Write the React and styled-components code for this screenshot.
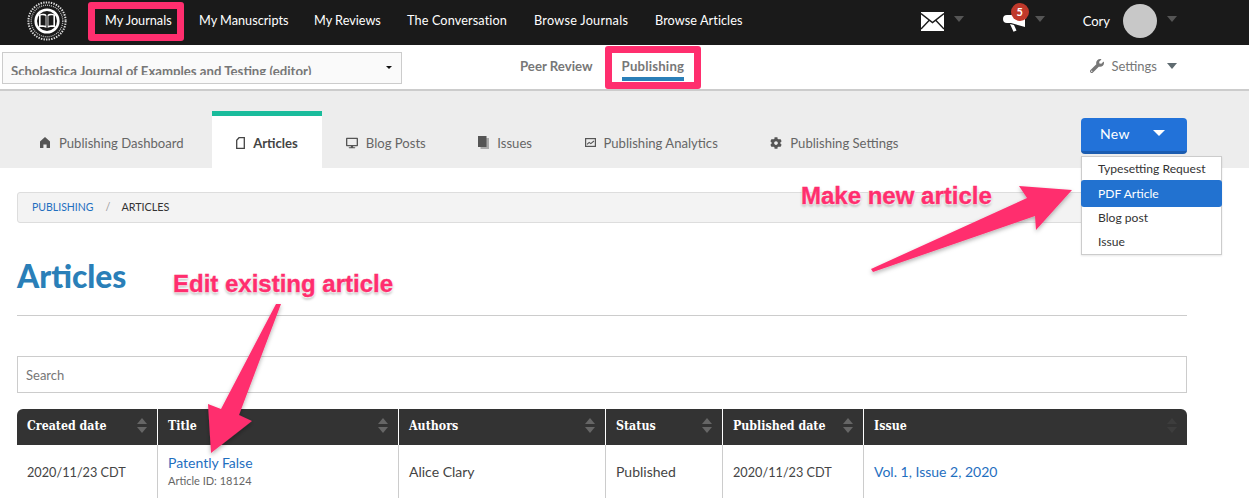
import React from "react";
import styled, { createGlobalStyle } from "styled-components";
import { FaDesktop, FaCog, FaWrench } from "react-icons/fa";

const columns = [
  { title: "Created date", width: 140, sortable: true },
  { title: "Title", width: 241, sortable: true },
  { title: "Authors", width: 207, sortable: true },
  { title: "Status", width: 117, sortable: true },
  { title: "Published date", width: 141, sortable: true },
  { title: "Issue", width: 324, sortable: false },
];

const navItems = [
  { label: "My Manuscripts", slot: 115, spacing: 0 },
  { label: "My Reviews", slot: 93, spacing: 0 },
  { label: "The Conversation", slot: 127, spacing: 0.12 },
  { label: "Browse Journals", slot: 121, spacing: 0.25 },
  { label: "Browse Articles", slot: 100, spacing: 0.07 },
];

const App = () => {
  return (
    <Page>
      <GlobalStyle />
      <TopBar>
        <SealLogo />
        <Nav>
          <NavLink $slot={94}>
            <NavLabel>
              My Journals
              <NavHighlight />
            </NavLabel>
          </NavLink>
          {navItems.map((item) => (
            <NavLink key={item.label} $slot={item.slot} $spacing={item.spacing}>
              {item.label}
            </NavLink>
          ))}
        </Nav>
        <UserArea>
          <IconMenu $width={43}>
            <EnvelopeIcon />
            <DarkCaret />
          </IconMenu>
          <IconMenu $width={43}>
            <MegaphoneIcon />
            <Badge>5</Badge>
            <DarkCaret />
          </IconMenu>
          <UserName>Cory</UserName>
          <Avatar />
          <DarkCaret />
        </UserArea>
      </TopBar>

      <SubBar>
        <JournalSelect>
          <JournalName>Scholastica Journal of Examples and Testing (editor)</JournalName>
          <SelectCaret />
        </JournalSelect>
        <SubNav>
          <SubLink>Peer Review</SubLink>
          <SubLink $active>
            Publishing
            <SubHighlight />
          </SubLink>
        </SubNav>
        <SettingsMenu>
          <FaWrench size={14} />
          <span>Settings</span>
          <GreyCaret />
        </SettingsMenu>
      </SubBar>

      <TabsBar>
        <Tabs>
          <Tab>
            <HomeIcon />
            Publishing Dashboard
          </Tab>
          <Tab $active>
            <ArticleIcon />
            Articles
          </Tab>
          <Tab>
            <FaDesktop size={12} />
            Blog Posts
          </Tab>
          <Tab>
            <IssuesIcon />
            Issues
          </Tab>
          <Tab>
            <AnalyticsIcon />
            Publishing Analytics
          </Tab>
          <Tab>
            <FaCog size={12} />
            Publishing Settings
          </Tab>
        </Tabs>
        <NewMenu>
          <NewButton>
            New
            <WhiteCaret />
          </NewButton>
          <Dropdown>
            <DropdownItem>Typesetting Request</DropdownItem>
            <DropdownItem $selected>PDF Article</DropdownItem>
            <DropdownItem>Blog post</DropdownItem>
            <DropdownItem>Issue</DropdownItem>
          </Dropdown>
        </NewMenu>
      </TabsBar>

      <Content>
        <Breadcrumb>
          <CrumbLink>Publishing</CrumbLink>
          <CrumbDivider>/</CrumbDivider>
          <span>Articles</span>
        </Breadcrumb>
        <Heading>Articles</Heading>
        <Divider />
        <SearchBox placeholder="Search" />
        <Table>
          <colgroup>
            {columns.map((col) => (
              <col key={col.title} width={col.width} />
            ))}
          </colgroup>
          <thead>
            <tr>
              {columns.map((col) => (
                <HeadCell key={col.title}>
                  {col.title}
                  <SortArrows $faded={!col.sortable}>
                    <i />
                    <i />
                  </SortArrows>
                </HeadCell>
              ))}
            </tr>
          </thead>
          <tbody>
            <tr>
              <DateCell>2020/11/23 CDT</DateCell>
              <BodyCell>
                <TitleLink>Patently False</TitleLink>
                <ArticleId>Article ID: 18124</ArticleId>
              </BodyCell>
              <BodyCell>Alice Clary</BodyCell>
              <BodyCell>Published</BodyCell>
              <DateCell>2020/11/23 CDT</DateCell>
              <BodyCell>
                <IssueLink>Vol. 1, Issue 2, 2020</IssueLink>
              </BodyCell>
            </tr>
          </tbody>
        </Table>
      </Content>

      <ArrowLayer viewBox="0 0 1249 498">
        <defs>
          <filter id="arrowShadow" x="-20%" y="-20%" width="140%" height="140%">
            <feDropShadow dx="0" dy="2" stdDeviation="2" floodColor="#000" floodOpacity="0.3" />
          </filter>
        </defs>
        <polygon
          filter="url(#arrowShadow)"
          fill="#ff2e6e"
          points="871,269 1027,198 1019,186 1072,190 1036,230 1035,216 873,272"
        />
        <polygon
          filter="url(#arrowShadow)"
          fill="#ff2e6e"
          points="276,304 281,304 239,415 252,421 211,453 208,404 221,409"
        />
      </ArrowLayer>
      <CalloutNew>Make new article</CalloutNew>
      <CalloutEdit>Edit existing article</CalloutEdit>
    </Page>
  );
};

const SealLogo = () => (
  <LogoSvg viewBox="0 0 40 40">
    <circle cx="20" cy="20" r="18.6" fill="none" stroke="#ddd" strokeWidth="2" strokeDasharray="1.4 1.2" />
    <circle cx="20" cy="20" r="15.8" fill="none" stroke="#bbb" strokeWidth="1.4" strokeDasharray="1 1" />
    <circle cx="20" cy="20" r="12.6" fill="#fff" />
    <circle cx="20" cy="20" r="10" fill="#1a1a1a" />
    <path d="M12 13.5c3-1 6-1 7.4.4V27c-1.6-1.2-4.4-1.4-7.4-.6zM28 13.5c-3-1-6-1-7.4.4V27c1.6-1.2 4.4-1.4 7.4-.6z" fill="#fff" />
    <path d="M13.6 14.6c2-.5 3.8-.4 5 .5v9.7c-1.4-.7-3.1-.8-5-.5zM26.4 14.6c-2-.5-3.8-.4-5 .5v9.7c1.4-.7 3.1-.8 5-.5z" fill="#1a1a1a" />
  </LogoSvg>
);

const EnvelopeIcon = () => (
  <svg width="23" height="19" viewBox="0 0 23 19">
    <rect width="23" height="19" fill="#fff" />
    <path d="M0 1.5l11.5 9 11.5-9M0 17l8.5-9M23 17l-8.5-9" fill="none" stroke="#1a1a1a" strokeWidth="1.4" />
  </svg>
);

const MegaphoneIcon = () => (
  <svg width="23" height="21" viewBox="0 0 23 21">
    <path d="M23 0v16L9 12H5a4 4 0 0 1 0-8h4z" fill="#fff" />
    <path d="M8 13l4 1 2.5 5.5-3 1.2z" fill="#fff" />
  </svg>
);

const HomeIcon = () => (
  <svg width="11" height="11" viewBox="0 0 11 11">
    <path d="M5 0l5 4.6V11H6.6V7.4H3.4V11H0V4.6z" fill="#555" />
  </svg>
);

const ArticleIcon = () => (
  <svg width="9" height="12" viewBox="0 0 9 12">
    <path d="M3 .7h5.3v10.6H.7V3.2z" fill="none" stroke="#444" strokeWidth="1.3" />
  </svg>
);

const IssuesIcon = () => (
  <svg width="11" height="13" viewBox="0 0 11 13">
    <rect x="2.5" y="2" width="8.5" height="11" fill="#aaa" />
    <rect width="8.5" height="11" fill="#555" />
  </svg>
);

const AnalyticsIcon = () => (
  <svg width="11" height="9" viewBox="0 0 11 9">
    <rect x=".6" y=".6" width="9.8" height="7.8" fill="none" stroke="#555" strokeWidth="1.2" />
    <path d="M2 6.4l2.2-2 1.6 1.2L9 3" fill="none" stroke="#555" strokeWidth="1.1" />
  </svg>
);

const GlobalStyle = createGlobalStyle`
  html, body {
    margin: 0;
    padding: 0;
    background: #fff;
    overflow: hidden;
  }
  body {
    font-family: "Lato", "Liberation Sans", sans-serif;
  }
`;

const Page = styled.div`
  position: relative;
  width: 1249px;
  height: 498px;
  overflow: hidden;
  background: #fff;
`;

const TopBar = styled.div`
  display: flex;
  align-items: center;
  height: 45px;
  padding-left: 27px;
  padding-right: 72px;
  box-sizing: border-box;
  background: #1a1a1a;
`;

const LogoSvg = styled.svg`
  width: 40px;
  height: 40px;
  margin-top: -3px;
`;

const Nav = styled.nav`
  display: flex;
  margin-left: 38px;
`;

const NavLink = styled.a`
  width: ${({ $slot }) => $slot}px;
  color: #fff;
  font-size: 12.7px;
  letter-spacing: ${({ $spacing }) => $spacing || 0}px;
  line-height: 16px;
  margin-top: -6px;
  white-space: nowrap;
`;

const NavLabel = styled.span`
  position: relative;
  display: inline-block;
`;

const NavHighlight = styled.span`
  position: absolute;
  left: -17px;
  right: -12px;
  top: -10px;
  bottom: -13px;
  border: 7px solid #ff2e6e;
  border-radius: 3px;
`;

const UserArea = styled.div`
  display: flex;
  align-items: center;
  margin-left: auto;
  margin-top: -3px;
`;

const IconMenu = styled.div`
  position: relative;
  display: flex;
  align-items: center;
  gap: 10px;
  margin-right: ${({ $width }) => $width - 5}px;
`;

const Badge = styled.span`
  position: absolute;
  left: 9px;
  top: -8px;
  width: 18px;
  height: 18px;
  border-radius: 50%;
  background: #c0392b;
  color: #fff;
  font-size: 11px;
  font-weight: 700;
  line-height: 18px;
  text-align: center;
`;

const Caret = styled.span`
  display: inline-block;
  width: 0;
  height: 0;
  border-left: 5px solid transparent;
  border-right: 5px solid transparent;
`;

const DarkCaret = styled(Caret)`
  border-top: 6px solid #555;
  margin-top: -4px;
`;

const GreyCaret = styled(Caret)`
  border-top: 6px solid #5f6b70;
  margin-left: 3px;
`;

const WhiteCaret = styled(Caret)`
  border-left-width: 6px;
  border-right-width: 6px;
  border-top: 6px solid #fff;
  margin-left: 23px;
`;

const UserName = styled.span`
  color: #fff;
  font-size: 13px;
`;

const Avatar = styled.span`
  width: 34px;
  height: 34px;
  margin: 0 10px 0 13px;
  border-radius: 50%;
  background: #c8c8c8;
`;

const SubBar = styled.div`
  display: flex;
  align-items: center;
  height: 46px;
  padding: 0 72px 0 2px;
  box-sizing: border-box;
  border-bottom: 2px solid #ccc;
  background: #fff;
`;

const JournalSelect = styled.div`
  position: relative;
  width: 400px;
  height: 32px;
  box-sizing: border-box;
  margin-top: 1px;
  padding-left: 8px;
  border: 1px solid #ccc;
  background: #fafafa;
`;

const JournalName = styled.div`
  height: 22px;
  overflow: hidden;
  color: #777;
  font-size: 13.2px;
  font-weight: 700;
  line-height: 36px;
  white-space: nowrap;
`;

const SelectCaret = styled(Caret)`
  position: absolute;
  right: 9px;
  top: 13px;
  border-left-width: 3px;
  border-right-width: 3px;
  border-top: 3px solid #111;
`;

const SubNav = styled.div`
  display: flex;
  gap: 29px;
  margin-left: 118px;
  margin-top: 4px;
`;

const SubLink = styled.a`
  position: relative;
  padding-bottom: 3px;
  color: #777;
  font-size: 13.2px;
  font-weight: 700;
  letter-spacing: ${({ $active }) => ($active ? "0.2px" : "0")};
  line-height: 16px;
  border-bottom: 4px solid ${({ $active }) => ($active ? "#2a7fb8" : "transparent")};
`;

const SubHighlight = styled.span`
  position: absolute;
  left: -17px;
  right: -17px;
  top: -12px;
  bottom: -12px;
  border: 7px solid #ff2e6e;
  border-radius: 3px;
`;

const SettingsMenu = styled.div`
  display: flex;
  align-items: center;
  gap: 7px;
  margin-left: auto;
  margin-top: -2px;
  color: #777;
  font-size: 13px;
`;

const TabsBar = styled.div`
  display: flex;
  justify-content: space-between;
  height: 77px;
  padding: 0 62px 0 16px;
  box-sizing: border-box;
  background: #ededed;
`;

const Tabs = styled.div`
  display: flex;
  align-items: flex-end;
  gap: 4.5px;
`;

const Tab = styled.a`
  display: flex;
  align-items: center;
  gap: 8px;
  height: ${({ $active }) => ($active ? "57px" : "53px")};
  padding: 2px 24px 0;
  box-sizing: border-box;
  margin-right: ${({ $active }) => ($active ? "-4.5px" : "0")};
  border-top: ${({ $active }) => ($active ? "5px solid #1abc9c" : "none")};
  background: ${({ $active }) => ($active ? "#fff" : "transparent")};
  color: ${({ $active }) => ($active ? "#444" : "#666")};
  font-size: 13.1px;
  font-weight: ${({ $active }) => ($active ? 700 : 400)};

  svg {
    color: #555;
  }
`;

const NewMenu = styled.div`
  position: relative;
  width: 106px;
  margin-top: 27px;
`;

const NewButton = styled.button`
  display: flex;
  align-items: center;
  width: 106px;
  height: 36px;
  padding: 0 0 3px 19px;
  box-sizing: border-box;
  border: none;
  border-bottom: 3px solid #1b5cb0;
  border-radius: 4px;
  background: #2272d9;
  color: #fff;
  font-family: inherit;
  font-size: 14px;
  letter-spacing: 0.3px;
`;

const Dropdown = styled.div`
  position: absolute;
  left: 0;
  top: 38px;
  z-index: 2;
  width: 141px;
  height: 99px;
  box-sizing: border-box;
  border: 1px solid #ccc;
  background: #fff;
  box-shadow: 0 1px 2px rgba(0, 0, 0, 0.1);
`;

const DropdownItem = styled.div`
  height: ${({ $selected }) => ($selected ? "27px" : "24px")};
  margin: ${({ $selected }) => ($selected ? "-1px -1px -1px" : "0")};
  padding-left: ${({ $selected }) => ($selected ? "17px" : "16px")};
  border-radius: 3px;
  background: ${({ $selected }) => ($selected ? "#2272d0" : "transparent")};
  color: ${({ $selected }) => ($selected ? "#fff" : "#333")};
  font-size: 12.1px;
  line-height: ${({ $selected }) => ($selected ? "27px" : "24px")};
`;

const Content = styled.main`
  padding: 24px 62px 0 17px;
`;

const Breadcrumb = styled.div`
  display: flex;
  align-items: center;
  height: 31px;
  padding: 0 0 2px 14px;
  box-sizing: border-box;
  border: 1px solid #ddd;
  border-radius: 3px;
  background: #f3f3f3;
  color: #333;
  font-size: 10.8px;
  text-transform: uppercase;
`;

const CrumbLink = styled.a`
  color: #1f6fbf;
  font-size: 10.5px;
`;

const CrumbDivider = styled.span`
  margin: 0 11px 0 12px;
  color: #999;
`;

const Heading = styled.h1`
  margin: 33px 0 0;
  color: #2a7fb8;
  font-size: 31.7px;
  font-weight: 900;
  line-height: 40px;
`;

const Divider = styled.hr`
  margin: 19px 0 0;
  border: none;
  border-top: 1px solid #ccc;
`;

const SearchBox = styled.input`
  display: block;
  width: 100%;
  height: 37px;
  margin-top: 40px;
  padding: 0 8px;
  box-sizing: border-box;
  border: 1px solid #ccc;
  font-family: inherit;
  font-size: 13px;

  &::placeholder {
    color: #777;
  }
`;

const Table = styled.table`
  width: 1170px;
  margin-top: 16px;
  border-collapse: separate;
  border-spacing: 0;
  table-layout: fixed;
`;

const HeadCell = styled.th`
  position: relative;
  height: 36px;
  padding: 0 0 3px 10px;
  box-sizing: border-box;
  border-left: 1px solid #fff;
  background: #333;
  color: #fff;
  font-family: "DejaVu Serif Condensed", "Liberation Serif", serif;
  font-size: 12.3px;
  font-weight: 700;
  text-align: left;

  &:first-child {
    border-left: none;
    border-top-left-radius: 6px;
  }

  &:last-child {
    border-top-right-radius: 6px;
  }
`;

const SortArrows = styled.span`
  position: absolute;
  right: 10px;
  top: 9px;
  display: flex;
  flex-direction: column;
  gap: 3px;
  opacity: ${({ $faded }) => ($faded ? 0.2 : 1)};

  i {
    width: 0;
    height: 0;
    border-left: 5px solid transparent;
    border-right: 5px solid transparent;
  }
  i:first-child {
    border-bottom: 6px solid #666;
  }
  i:last-child {
    border-top: 6px solid #666;
  }
`;

const BodyCell = styled.td`
  height: 54px;
  padding: 0 0 1px 10px;
  box-sizing: border-box;
  border-left: 1px solid #ccc;
  color: #444;
  font-size: 14px;
  vertical-align: middle;

  &:first-child {
    border-left: none;
  }
`;

const DateCell = styled(BodyCell)`
  font-size: 12.7px;
`;

const TitleLink = styled.a`
  display: block;
  margin-top: -1px;
  color: #1f6fbf;
  font-size: 14px;
  line-height: 17px;
`;

const ArticleId = styled.div`
  margin-top: 3px;
  color: #666;
  font-size: 11px;
  line-height: 14px;
`;

const IssueLink = styled.a`
  color: #1f6fbf;
  font-size: 14px;
`;

const ArrowLayer = styled.svg`
  position: absolute;
  inset: 0;
  z-index: 3;
  width: 1249px;
  height: 498px;
  pointer-events: none;
`;

const Callout = styled.div`
  position: absolute;
  z-index: 4;
  color: #ff2e6e;
  font-family: "Liberation Sans", sans-serif;
  font-size: 24px;
  font-weight: 700;
  line-height: 28px;
  white-space: nowrap;
  -webkit-text-stroke: 0.4px #ff2e6e;
  text-shadow: 0 0 2px #fff, 0 0 2px #fff, 0 1px 2px #fff, 0 2px 3px rgba(0, 0, 0, 0.4);
`;

const CalloutNew = styled(Callout)`
  left: 801px;
  top: 182px;
`;

const CalloutEdit = styled(Callout)`
  left: 173px;
  top: 270px;
`;

export default App;
